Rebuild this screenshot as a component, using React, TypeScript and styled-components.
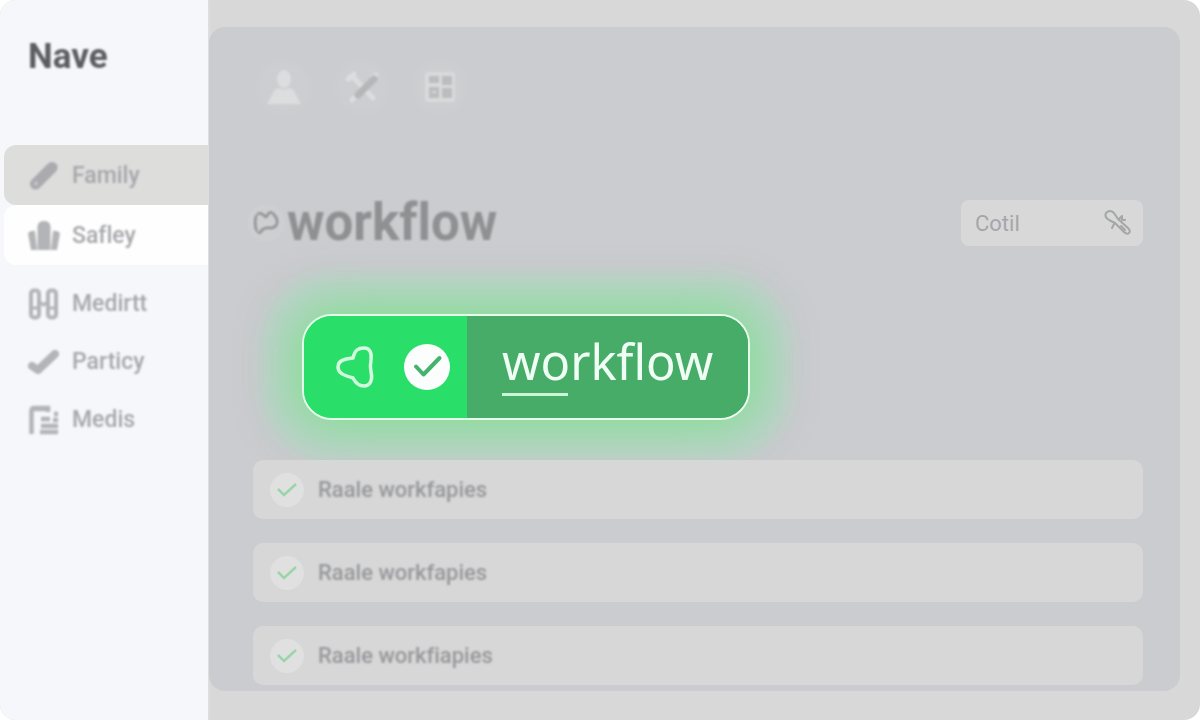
import React from 'react';
import styled, { createGlobalStyle, css } from 'styled-components';

const GlobalStyle = createGlobalStyle`
  *, *::before, *::after { box-sizing: border-box; }
  body {
    margin: 0;
    background: #ffffff;
    font-family: Roboto, "Liberation Sans", sans-serif;
    font-variant-ligatures: none;
  }
  h1, h2, ul { margin: 0; padding: 0; }
  ul { list-style: none; }
  button, input { font: inherit; color: inherit; }
`;

const soft = css`
  filter: blur(1px);
`;

const Shell = styled.div`
  display: grid;
  grid-template-columns: 208px minmax(0, 1fr);
  min-height: 100vh;
  border-radius: 16px;
  overflow: hidden;
  background: #d8d8d8;
`;

const Sidebar = styled.aside`
  background: #f5f7fb;
  padding: 33px 0 32px 4px;
  box-shadow: 0 0 4px #e4e6ea;
`;

const Brand = styled.h2`
  ${soft}
  padding-left: 24px;
  margin-bottom: 64px;
  font-size: 35px;
  line-height: 48px;
  font-weight: 700;
  color: #5c5d60;
`;

const NavGroup = styled.ul<{ $spaced?: boolean }>`
  margin-top: ${(p) => (p.$spaced ? '9px' : '0')};
`;

const NavLink = styled.a<{ $tone?: string; $compact?: boolean }>`
  display: flex;
  align-items: center;
  gap: 12px;
  height: ${(p) => (p.$compact ? '58px' : '60px')};
  padding: 2px 0 0 24px;
  border-radius: 12px 0 0 12px;
  background: ${(p) => p.$tone ?? 'transparent'};
  color: #a6a7ab;
  text-decoration: none;
  font-size: 23px;
  line-height: 32px;
  font-weight: 500;

  svg, span { ${soft} }
  svg { color: #b3b4b7; }
`;

const Main = styled.main`
  padding: 27px 20px 29px 1px;
`;

const Panel = styled.section`
  height: 100%;
  padding: 29px 37px 6px 44px;
  border-radius: 16px;
  background: #cacccf;
`;

const Toolbar = styled.div`
  display: flex;
  gap: 16px;
`;

const ToolButton = styled.button`
  display: grid;
  place-items: center;
  width: 62px;
  height: 62px;
  padding: 0;
  border: 0;
  border-radius: 50%;
  background: radial-gradient(circle, rgba(255, 255, 255, 0.04) 50%, transparent 72%);
  color: #dcddde;

  svg { ${soft} }
`;

const Header = styled.header`
  display: flex;
  align-items: center;
  justify-content: space-between;
  margin-top: 75px;
`;

const Title = styled.div`
  ${soft}
  display: flex;
  align-items: center;
  gap: 8px;
  color: #8f9092;

  svg {
    border-radius: 50%;
    box-shadow: 0 0 0 6px rgba(255, 255, 255, 0.06);
    background: rgba(255, 255, 255, 0.06);
  }

  h1 {
    font-size: 51px;
    line-height: 60px;
    font-weight: 700;
  }
`;

const Field = styled.label`
  display: flex;
  align-items: center;
  justify-content: space-between;
  width: 182px;
  height: 46px;
  padding: 0 12px 0 14px;
  border-radius: 8px;
  background: #d8d8d9;
  color: #a5a6a7;

  svg { flex: none; }
`;

const FieldInput = styled.input`
  width: 100px;
  padding: 2px 0 0;
  border: 0;
  outline: 0;
  background: transparent;
  font-size: 22px;
  line-height: 32px;
`;

const Pill = styled.button`
  display: flex;
  align-items: stretch;
  width: 448px;
  height: 106px;
  margin: 61px 0 0 49px;
  padding: 0;
  overflow: hidden;
  border: 2px solid #e6fbec;
  border-radius: 30px;
  background: linear-gradient(90deg, #29df69 50%, #48ac69 50%);
  color: #f0fff4;
  box-shadow:
    0 0 44px 8px rgba(122, 224, 136, 0.85),
    0 0 18px 40px rgba(178, 214, 196, 0.75),
    0 0 14px 54px rgba(205, 202, 208, 0.5);
`;

const PillIcons = styled.span`
  display: flex;
  align-items: center;
  gap: 28px;
  width: 163px;
  padding-left: 32px;
  background: #29df69;
`;

const PillLabel = styled.span`
  flex: 1;
  padding: 13px 0 0 35px;
  background: #48ac69;
  text-align: left;
  font-family: "Noto Sans", "Open Sans", sans-serif;
  font-size: 49px;
  line-height: 64px;
`;

const Underline = styled.span`
  display: block;
  width: 66px;
  height: 3px;
  background: #c9f6d6;
`;

const TaskList = styled.ul`
  display: grid;
  gap: 24px;
  margin-top: 40px;
`;

const Task = styled.li`
  display: flex;
  align-items: center;
  gap: 14px;
  height: 59px;
  padding-left: 17px;
  border-radius: 10px;
  background: rgba(216, 216, 216, 0.92);
  color: #97989b;
  font-size: 22px;
  line-height: 32px;
  font-weight: 500;

  > span:last-child { ${soft} }
`;

const Badge = styled.span`
  display: grid;
  place-items: center;
  width: 34px;
  height: 34px;
  border-radius: 50%;
  background: #dfe0df;
  color: #9bd5aa;
`;

const PencilIcon = () => (
  <svg width="32" height="32" viewBox="0 0 32 32" fill="none">
    <path d="M7.5 24 24 7.500" stroke="#aaaaaf" strokeWidth="11" strokeLinecap="round" />
    <circle cx="8" cy="23.500" r="2" fill="#c6c7c9" />
  </svg>
);

const BooksIcon = () => (
  <svg width="32" height="32" viewBox="0 0 32 32" fill="currentColor">
    <path d="M9.500 30V6q1-5 6.500-5t6.500 5v24z" />
    <path d="M0 13q3-3 7-2l2 19H3z" />
    <path d="M32 13q-3-3-7-2l-2 19h6z" />
  </svg>
);

const ColumnsIcon = () => (
  <svg width="32" height="32" viewBox="0 0 32 32" fill="none" stroke="currentColor" strokeWidth="4">
    <rect x="3" y="2.500" width="8" height="27" rx="3" />
    <rect x="20" y="2.500" width="8" height="27" rx="3" />
    <path d="M11 13l4.500 4 4.500-4M4 20h6M21 20h6" strokeWidth="3" />
  </svg>
);

const ThickCheckIcon = () => (
  <svg width="32" height="32" viewBox="0 0 32 32" fill="none" stroke="currentColor" strokeWidth="8" strokeLinecap="round" strokeLinejoin="round">
    <path d="M4 20l6 4L27 8" />
  </svg>
);

const ReportIcon = () => (
  <svg width="32" height="32" viewBox="0 0 32 32" fill="none" stroke="currentColor" strokeWidth="4.500">
    <path d="M3.500 30V7q0-3 3-3H20v4M5 5h14" />
    <path d="M13 15h9M13 22h17M12 28h18M26 10h4M25 16h5" />
  </svg>
);

const PersonIcon = () => (
  <svg width="36" height="36" viewBox="0 0 36 36" fill="currentColor">
    <ellipse cx="18" cy="10" rx="7" ry="9" />
    <path d="M1 35 8 22q2-3 5-3 5 3 10 0 3 0 5 3l7 13z" />
  </svg>
);

const ToolsIcon = () => (
  <svg width="36" height="36" viewBox="0 0 36 36" fill="none" strokeLinecap="round">
    <path d="M8 7l21 22M4 10l6-5M8 31l6-6M29 8l3-2" stroke="currentColor" strokeWidth="5" />
    <path d="M14 26 30 10" stroke="#b5b6b8" strokeWidth="7" />
  </svg>
);

const GridIcon = () => (
  <svg width="30" height="30" viewBox="0 0 30 30">
    <rect x="0" y="0" width="30" height="30" rx="3" fill="#d9dadb" />
    <g fill="#bcbdc0">
      <rect x="4" y="4" width="10" height="7" />
      <rect x="17" y="4" width="10" height="9" />
      <rect x="4" y="15" width="10" height="11" />
      <rect x="17" y="16" width="10" height="10" />
    </g>
    <path d="M7 20h4" stroke="#d9dadb" strokeWidth="2" />
  </svg>
);

const FlagIcon = () => (
  <svg width="26" height="26" viewBox="0 0 26 26" fill="none" stroke="currentColor" strokeWidth="2.500" strokeLinejoin="round">
    <path d="M3 5Q6 2 9 4L13 7L16 3Q20 1 21 5Q25 8 24 13Q23 18 17 18Q12 17 9 20Q6 25 4 23Q1 14 3 5z" />
  </svg>
);

const WrenchIcon = () => (
  <svg width="28" height="28" viewBox="0 0 28 28" fill="none" stroke="currentColor" strokeWidth="2" strokeLinejoin="round" strokeLinecap="round">
    <path d="M3 4q4-4 8 0l4 6 10 9q3 3 1 5t-5-1l-9-9-6-3Q1 8 3 4z" />
    <path d="M9 19l2-4M16 10l3-3v4h3M18 17l4 4" />
  </svg>
);

const BlobIcon = () => (
  <svg width="40" height="44" viewBox="0 0 40 44" fill="none" stroke="#d3fadf" strokeWidth="3.500" strokeLinejoin="round">
    <path d="M17 13C19 5 22 3 28 3C34 3 36 8 35 15C34 20 34 22 35 27C37 35 34 41 28 41C22 41 19 37 17 33C7 30 2 28 2 22C2 16 7 14 17 13Z" />
  </svg>
);

const RoundCheckIcon = () => (
  <svg width="46" height="46" viewBox="0 0 46 46" fill="none">
    <circle cx="23" cy="23" r="23" fill="#fbfefc" />
    <path d="M12 22.500l7.500 8L35.500 14" stroke="#45b36c" strokeWidth="4" strokeLinecap="round" strokeLinejoin="round" />
  </svg>
);

const SmallCheckIcon = () => (
  <svg width="20" height="16" viewBox="0 0 20 16" fill="none">
    <path d="M1 7l6 6L19 2" stroke="currentColor" strokeWidth="2.500" />
  </svg>
);

const tasks = ['Raale workfapies', 'Raale workfapies', 'Raale workfiapies'];

export default function App() {
  return (
    <>
      <GlobalStyle />
      <Shell>
        <Sidebar>
          <Brand>Nave</Brand>
          <nav aria-label="Main">
            <NavGroup>
              <li><NavLink href="#family" $tone="#dddddc"><PencilIcon /><span>Family</span></NavLink></li>
              <li><NavLink href="#safley" $tone="#fefefe"><BooksIcon /><span>Safley</span></NavLink></li>
            </NavGroup>
            <NavGroup $spaced>
              <li><NavLink href="#medirtt" $compact><ColumnsIcon /><span>Medirtt</span></NavLink></li>
              <li><NavLink href="#particy" $compact><ThickCheckIcon /><span>Particy</span></NavLink></li>
              <li><NavLink href="#medis" $compact><ReportIcon /><span>Medis</span></NavLink></li>
            </NavGroup>
          </nav>
        </Sidebar>
        <Main>
          <Panel>
            <Toolbar>
              <ToolButton aria-label="Profile"><PersonIcon /></ToolButton>
              <ToolButton aria-label="Tools"><ToolsIcon /></ToolButton>
              <ToolButton aria-label="Board"><GridIcon /></ToolButton>
            </Toolbar>
            <Header>
              <Title><FlagIcon /><h1>workflow</h1></Title>
              <Field>
                <FieldInput type="text" aria-label="Cotil" defaultValue="Cotil" />
                <WrenchIcon />
              </Field>
            </Header>
            <Pill type="button">
              <PillIcons><BlobIcon /><RoundCheckIcon /></PillIcons>
              <PillLabel>workflow<Underline /></PillLabel>
            </Pill>
            <TaskList>
              {tasks.map((name, i) => (
                <Task key={i}>
                  <Badge><SmallCheckIcon /></Badge>
                  <span>{name}</span>
                </Task>
              ))}
            </TaskList>
          </Panel>
        </Main>
      </Shell>
    </>
  );
}
